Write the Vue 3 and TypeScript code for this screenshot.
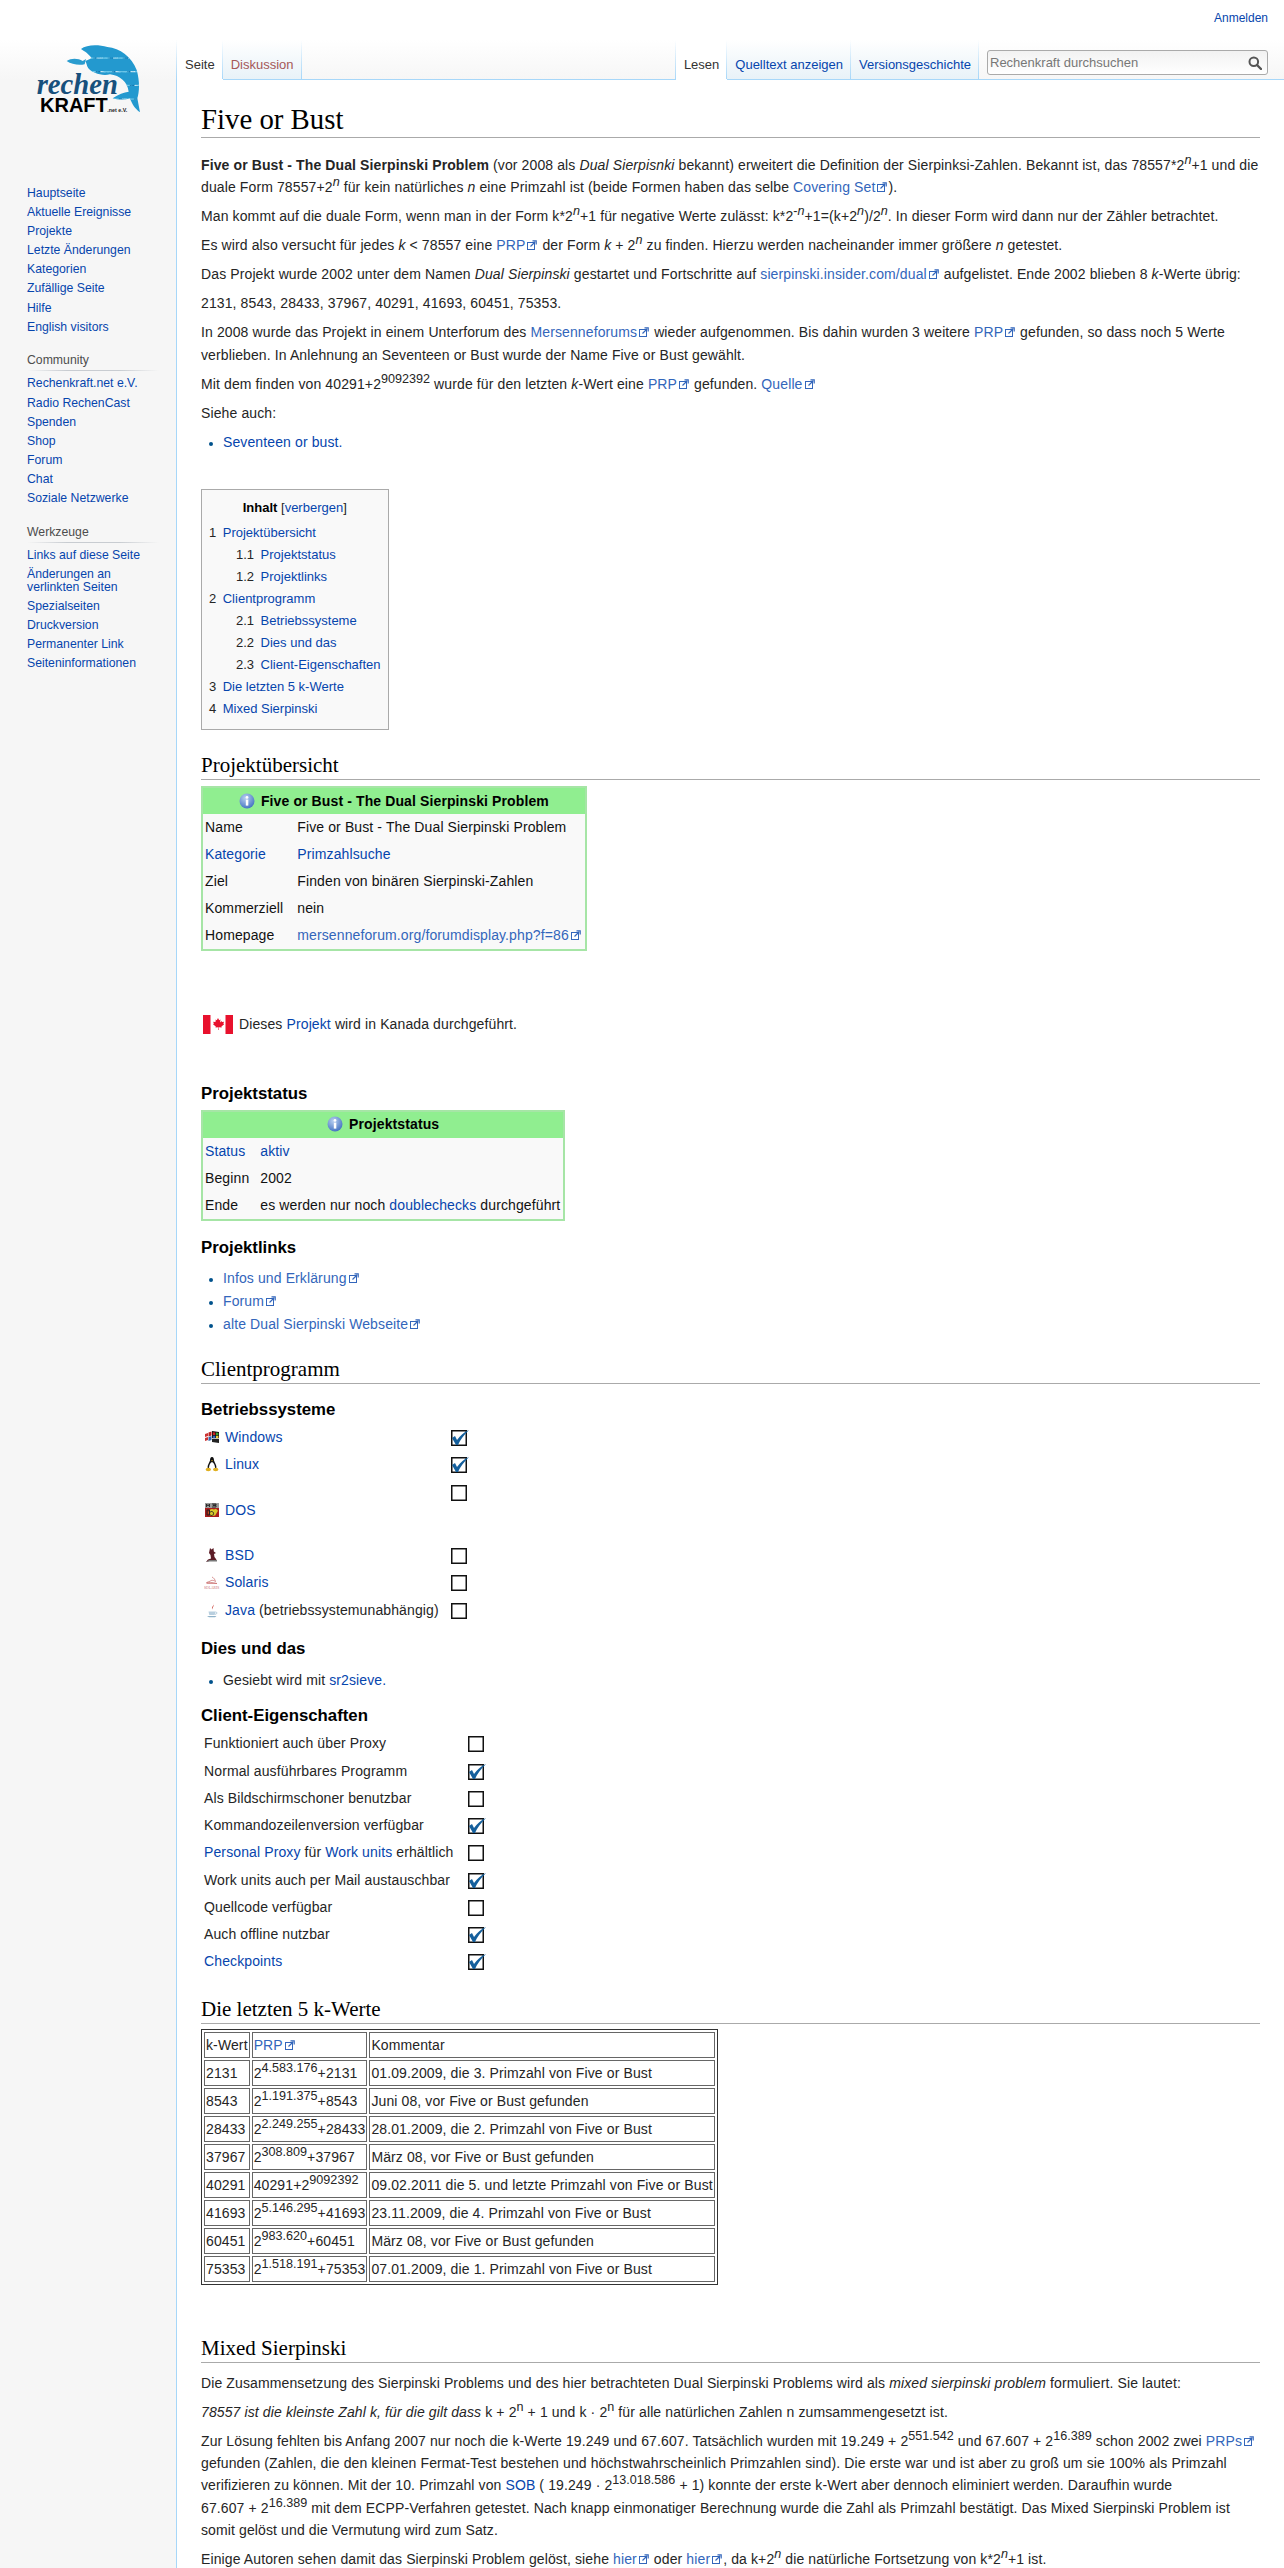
<script setup lang="ts">
interface NavGroup { title?: string; links: string[] }
interface TocItem { num: string; label: string; sub?: boolean }

const navGroups: NavGroup[] = [
  { links: ['Hauptseite', 'Aktuelle Ereignisse', 'Projekte', 'Letzte Änderungen', 'Kategorien', 'Zufällige Seite', 'Hilfe', 'English visitors'] },
  { title: 'Community', links: ['Rechenkraft.net e.V.', 'Radio RechenCast', 'Spenden', 'Shop', 'Forum', 'Chat', 'Soziale Netzwerke'] },
  { title: 'Werkzeuge', links: ['Links auf diese Seite', 'Änderungen an verlinkten Seiten', 'Spezialseiten', 'Druckversion', 'Permanenter Link', 'Seiteninformationen'] },
]

const toc: TocItem[] = [
  { num: '1', label: 'Projektübersicht' },
  { num: '1.1', label: 'Projektstatus', sub: true },
  { num: '1.2', label: 'Projektlinks', sub: true },
  { num: '2', label: 'Clientprogramm' },
  { num: '2.1', label: 'Betriebssysteme', sub: true },
  { num: '2.2', label: 'Dies und das', sub: true },
  { num: '2.3', label: 'Client-Eigenschaften', sub: true },
  { num: '3', label: 'Die letzten 5 k-Werte' },
  { num: '4', label: 'Mixed Sierpinski' },
]

const systems = [
  { name: 'Windows', checked: true, tall: false },
  { name: 'Linux', checked: true, tall: false },
  { name: 'DOS', checked: false, tall: true },
  { name: 'BSD', checked: false, tall: false },
  { name: 'Solaris', checked: false, tall: false },
  { name: 'Java', note: ' (betriebssystemunabhängig)', checked: false, tall: false },
]

const features = [
  { text: 'Funktioniert auch über Proxy', checked: false },
  { text: 'Normal ausführbares Programm', checked: true },
  { text: 'Als Bildschirmschoner benutzbar', checked: false },
  { text: 'Kommandozeilenversion verfügbar', checked: true },
  { proxy: true, checked: false },
  { text: 'Work units auch per Mail austauschbar', checked: true },
  { text: 'Quellcode verfügbar', checked: false },
  { text: 'Auch offline nutzbar', checked: true },
  { link: 'Checkpoints', checked: true },
]

const primes = [
  { k: '2131', exp: '4.583.176', tail: '+2131', note: '01.09.2009, die 3. Primzahl von Five or Bust' },
  { k: '8543', exp: '1.191.375', tail: '+8543', note: 'Juni 08, vor Five or Bust gefunden' },
  { k: '28433', exp: '2.249.255', tail: '+28433', note: '28.01.2009, die 2. Primzahl von Five or Bust' },
  { k: '37967', exp: '308.809', tail: '+37967', note: 'März 08, vor Five or Bust gefunden' },
  { k: '40291', head: '40291+2', exp: '9092392', tail: '', note: '09.02.2011 die 5. und letzte Primzahl von Five or Bust' },
  { k: '41693', exp: '5.146.295', tail: '+41693', note: '23.11.2009, die 4. Primzahl von Five or Bust' },
  { k: '60451', exp: '983.620', tail: '+60451', note: 'März 08, vor Five or Bust gefunden' },
  { k: '75353', exp: '1.518.191', tail: '+75353', note: '07.01.2009, die 1. Primzahl von Five or Bust' },
]

// kleine Fische im Delfin, feste Streuung damit das Logo stabil bleibt
const fish = Array.from({ length: 260 }, (_, i) => ({
  x: 180 + ((i * 67) % 185),
  y: 28 + ((i * 41) % 205),
  rx: 2 + (i % 4),
  fill: i % 4 === 0 ? '#0f6fa8' : i % 4 === 1 ? '#d5eff9' : '#6cc6e8',
}))
</script>

<template>
  <div class="page">
    <aside class="sidebar">
      <svg class="logo" viewBox="0 0 390 270" width="130" height="90">
        <defs>
          <clipPath id="dolphin">
            <path d="M183 42C200 28 235 28 262 36C300 40 335 65 350 105C360 140 358 170 352 190L360 232C345 222 335 205 330 190C315 195 295 195 278 190C295 178 312 172 326 170C322 140 300 122 270 118C245 125 215 112 205 100C200 92 200 85 196 78L215 70C205 55 195 50 183 42Z" />
          </clipPath>
        </defs>
        <path d="M140 78C155 68 175 70 188 78L198 72L194 88C175 92 155 88 140 78Z" fill="#2a9ccf" />
        <g clip-path="url(#dolphin)">
          <rect x="170" y="20" width="200" height="220" fill="#2399cf" />
          <ellipse v-for="(f, i) in fish" :key="i" :cx="f.x" :cy="f.y" :rx="f.rx" ry="1.800" :fill="f.fill" />
        </g>
        <text x="50" y="178" class="logo-rechen">rechen</text>
        <text x="60" y="232" class="logo-kraft">KRAFT</text>
        <text x="262" y="232" class="logo-net">.net e.V.</text>
      </svg>
      <nav v-for="(group, i) in navGroups" :key="i" class="portal">
        <h5 v-if="group.title">{{ group.title }}</h5>
        <ul>
          <li v-for="link in group.links" :key="link"><a>{{ link }}</a></li>
        </ul>
      </nav>
    </aside>

    <div class="main">
      <header class="head">
        <div class="personal"><a>Anmelden</a></div>
        <div class="nav">
          <div class="tabs">
            <span class="tab selected">Seite</span>
            <a class="tab new">Diskussion</a>
          </div>
          <div class="nav-right">
            <div class="tabs">
              <span class="tab selected">Lesen</span>
              <a class="tab">Quelltext anzeigen</a>
              <a class="tab">Versionsgeschichte</a>
            </div>
            <div class="search">
              <input placeholder="Rechenkraft durchsuchen" />
              <svg width="14" height="14" viewBox="0 0 14 14">
                <circle cx="5.8" cy="5.8" r="4.3" fill="none" stroke="#555" stroke-width="2" />
                <path d="M9 9l4 4" stroke="#555" stroke-width="2.4" stroke-linecap="round" />
              </svg>
            </div>
          </div>
        </div>
      </header>

      <main class="content">
        <h1>Five or Bust</h1>

        <div class="intro">
          <p><b>Five or Bust - The Dual Sierpinski Problem</b> (vor 2008 als <i>Dual Sierpisnki</i> bekannt) erweitert die Definition der Sierpinksi-Zahlen. Bekannt ist, das 78557*2<sup><i>n</i></sup>+1 und die duale Form 78557+2<sup><i>n</i></sup> für kein natürliches <i>n</i> eine Primzahl ist (beide Formen haben das selbe <a class="ext">Covering Set</a>).</p>
          <p>Man kommt auf die duale Form, wenn man in der Form k*2<sup><i>n</i></sup>+1 für negative Werte zulässt: k*2<sup>-<i>n</i></sup>+1=(k+2<sup><i>n</i></sup>)/2<sup><i>n</i></sup>. In dieser Form wird dann nur der Zähler betrachtet.</p>
          <p>Es wird also versucht für jedes <i>k</i> &lt; 78557 eine <a class="ext">PRP</a> der Form <i>k</i> + 2<sup><i>n</i></sup> zu finden. Hierzu werden nacheinander immer größere <i>n</i> getestet.</p>
          <p>Das Projekt wurde 2002 unter dem Namen <i>Dual Sierpinski</i> gestartet und Fortschritte auf <a class="ext">sierpinski.insider.com/dual</a> aufgelistet. Ende 2002 blieben 8 <i>k</i>-Werte übrig:</p>
          <p>2131, 8543, 28433, 37967, 40291, 41693, 60451, 75353.</p>
          <p>In 2008 wurde das Projekt in einem Unterforum des <a class="ext">Mersenneforums</a> wieder aufgenommen. Bis dahin wurden 3 weitere <a class="ext">PRP</a> gefunden, so dass noch 5 Werte verblieben. In Anlehnung an Seventeen or Bust wurde der Name Five or Bust gewählt.</p>
          <p>Mit dem finden von 40291+2<sup>9092392</sup> wurde für den letzten <i>k</i>-Wert eine <a class="ext">PRP</a> gefunden. <a class="ext">Quelle</a></p>
          <p>Siehe auch:</p>
          <ul class="list"><li><a>Seventeen or bust.</a></li></ul>
        </div>

        <div class="toc">
          <div class="toc-title"><b>Inhalt</b> [<a>verbergen</a>]</div>
          <div v-for="item in toc" :key="item.num" class="toc-item" :class="{ sub: item.sub }">
            <span>{{ item.num }}</span><a>{{ item.label }}</a>
          </div>
        </div>

        <h2 class="h-overview">Projektübersicht</h2>
        <table class="infobox">
          <thead>
            <tr><th colspan="2">
              <svg class="info" width="16" height="16" viewBox="0 0 16 16">
                <defs>
                  <radialGradient id="infoFill" cx="40%" cy="30%" r="75%">
                    <stop offset="0" stop-color="#b9d0f0" /><stop offset="1" stop-color="#3f6fc0" />
                  </radialGradient>
                </defs>
                <circle cx="8" cy="8" r="7.5" fill="url(#infoFill)" />
                <circle cx="8" cy="4.4" r="1.4" fill="#fff" />
                <rect x="6.8" y="6.6" width="2.5" height="6" fill="#fff" />
              </svg>
              Five or Bust - The Dual Sierpinski Problem
            </th></tr>
          </thead>
          <tbody>
            <tr><td>Name</td><td>Five or Bust - The Dual Sierpinski Problem</td></tr>
            <tr><td><a>Kategorie</a></td><td><a>Primzahlsuche</a></td></tr>
            <tr><td>Ziel</td><td>Finden von binären Sierpinski-Zahlen</td></tr>
            <tr><td>Kommerziell</td><td>nein</td></tr>
            <tr><td>Homepage</td><td><a class="ext">mersenneforum.org/forumdisplay.php?f=86</a></td></tr>
          </tbody>
        </table>

        <div class="country">
          <svg width="30" height="19" viewBox="0 0 30 19">
            <rect width="30" height="19" fill="#fff" />
            <rect width="7.5" height="19" fill="#e8112d" />
            <rect x="22.5" width="7.5" height="19" fill="#e8112d" />
            <path d="M15 3l1.2 2.2 1.3-.7-.5 3 1.6-1.500.4 1 2-.3-.6 2 .8.500-2.800 2.300.3 1.100-2.900-.3.1 2.700h-.6l.1-2.700-2.900.3.3-1.100-2.800-2.300.8-.5-.6-2 2 .3.4-1L13 7.500l-.5-3 1.300.7z" fill="#e8112d" />
          </svg>
          <span>Dieses <a>Projekt</a> wird in Kanada durchgeführt.</span>
        </div>

        <h3 class="h-status">Projektstatus</h3>
        <table class="infobox narrow">
          <thead>
            <tr><th colspan="2">
              <svg class="info" width="16" height="16" viewBox="0 0 16 16">
                <circle cx="8" cy="8" r="7.5" fill="url(#infoFill)" />
                <circle cx="8" cy="4.4" r="1.4" fill="#fff" />
                <rect x="6.8" y="6.6" width="2.5" height="6" fill="#fff" />
              </svg>
              Projektstatus
            </th></tr>
          </thead>
          <tbody>
            <tr><td><a>Status</a></td><td><a>aktiv</a></td></tr>
            <tr><td>Beginn</td><td>2002</td></tr>
            <tr><td>Ende</td><td>es werden nur noch <a>doublechecks</a> durchgeführt</td></tr>
          </tbody>
        </table>

        <h3 class="h-links">Projektlinks</h3>
        <ul class="list links">
          <li><a class="ext">Infos und Erklärung</a></li>
          <li><a class="ext">Forum</a></li>
          <li><a class="ext">alte Dual Sierpinski Webseite</a></li>
        </ul>

        <h2 class="h-client">Clientprogramm</h2>
        <h3 class="h-os">Betriebssysteme</h3>
        <table class="os">
          <tbody>
            <tr v-for="sys in systems" :key="sys.name" :class="{ tall: sys.tall }">
              <td class="os-name">
                <svg v-if="sys.name === 'Windows'" class="os-icon" viewBox="0 0 16 16">
                  <path d="M1 5l3-1v3l-3 1zM1 9l3-1v3l-3 1z" fill="#c33" />
                  <path d="M4.500 3.500l3-1v4l-3 1z" fill="#b22" /><path d="M4.500 8l3-1v4l-3 1z" fill="#36a" />
                  <path d="M8 2l7 1v6H8z" fill="#111" /><path d="M8.800 3.200l2.500.3v2.400H8.800z" fill="#c22" />
                  <path d="M12 3.600l2.400.3v2.100H12z" fill="#3a3" /><path d="M8.800 6.700h2.500v2.500H8.800z" fill="#36b" />
                  <path d="M12 6.700h2.400v2.500H12z" fill="#ec3" /><path d="M8 9.800h7V14l-7-1z" fill="#222" />
                </svg>
                <svg v-else-if="sys.name === 'Linux'" class="os-icon" viewBox="0 0 16 16">
                  <path d="M8 1C6.300 1 6 3 6 4.500 5.500 6.500 3.500 8.500 3.500 11.500L5 13h6l1.500-1.500C12.500 8.500 10.500 6.500 10 4.500 10 3 9.700 1 8 1z" fill="#111" />
                  <path d="M8 6C6.500 6.500 5 9 5 11.500L6 13h4l1-1.500C11 9 9.500 6.500 8 6z" fill="#fff" />
                  <ellipse cx="4.300" cy="13.500" rx="2.700" ry="1.700" fill="#e0b020" /><ellipse cx="11.700" cy="13.500" rx="2.700" ry="1.700" fill="#e0b020" />
                  <path d="M7 4.300h2L8 5.500z" fill="#e0b020" />
                </svg>
                <svg v-else-if="sys.name === 'DOS'" class="os-icon" viewBox="0 0 16 16">
                  <rect x="1" y="1" width="14" height="5" fill="#9a9a9a" />
                  <path d="M2.500 5V2l1.500 2 1.500-2v3M8 2H12v1H9v.5h3V5H8" fill="none" stroke="#222" stroke-width=".9" />
                  <rect x="1" y="6" width="14" height="9" fill="#a81d1d" />
                  <path d="M10 7.500a3.500 3.500 0 1 0 0 6l1 .3 3-5-2-2z" fill="#d9c92a" />
                  <path d="M3 8h2.500v5H3zM7.500 9.500a2 2 0 1 0 .1 0z" fill="none" stroke="#222" />
                </svg>
                <svg v-else-if="sys.name === 'BSD'" class="os-icon" viewBox="0 0 16 16">
                  <path d="M6 1l1.500 1.500L9.500 1 9.800 4.500 12 6 10 7l.5 3 1.500 2 1 2H5.500L2 15l2-2.500 3-1-.500-3.500L5 6z" fill="#5c1c26" />
                  <path d="M2 15l3-2h8v1.500H5z" fill="#777" />
                </svg>
                <svg v-else-if="sys.name === 'Solaris'" class="os-icon" viewBox="0 0 16 16">
                  <path d="M8 3c2 1 3 2.500 3.500 4.500C10 6.500 8.500 6 7 6.500 6 7.500 4 8 2.500 8.500 5 8.500 8 8 13 9.500H2.500" fill="none" stroke="#c96a6a" stroke-width=".7" />
                  <text x="0" y="14.500" class="solaris">SOLARIS</text>
                </svg>
                <svg v-else class="os-icon" viewBox="0 0 16 16">
                  <path d="M9 1C11 3.500 6.500 4.500 8.500 8 7.500 5.500 11 5 9 1z" fill="#c8423a" />
                  <path d="M4.500 9.500h7l-.8 3.500H5.300z" fill="#b9cfdf" />
                  <path d="M3 14h9.500l-1.500 1.200H5z" fill="#8fb2c9" />
                  <path d="M11.500 10c2 0 2 2-.5 2.300" fill="none" stroke="#8fb2c9" stroke-width=".7" />
                </svg>
                <a>{{ sys.name }}</a><span v-if="sys.note">{{ sys.note }}</span>
              </td>
              <td class="check-cell">
                <svg class="check" viewBox="0 0 19 16">
                  <rect x=".75" y=".75" width="14.500" height="14.500" fill="#fff" stroke="#111" stroke-width="1.500" />
                  <path v-if="sys.checked" d="M1 8L4 6l2 4C9 6 13 2 18 0 13 5 9 10 7 15H5z" fill="#145f9c" />
                </svg>
              </td>
            </tr>
          </tbody>
        </table>

        <h3 class="h-misc">Dies und das</h3>
        <ul class="list misc"><li>Gesiebt wird mit <a>sr2sieve.</a></li></ul>

        <h3 class="h-props">Client-Eigenschaften</h3>
        <table class="props">
          <tbody>
            <tr v-for="(feat, i) in features" :key="i">
              <td class="prop-name">
                <template v-if="feat.proxy"><a>Personal Proxy</a> für <a>Work units</a> erhältlich</template>
                <a v-else-if="feat.link">{{ feat.link }}</a>
                <template v-else>{{ feat.text }}</template>
              </td>
              <td class="check-cell">
                <svg class="check" viewBox="0 0 19 16">
                  <rect x=".75" y=".75" width="14.500" height="14.500" fill="#fff" stroke="#111" stroke-width="1.500" />
                  <path v-if="feat.checked" d="M1 8L4 6l2 4C9 6 13 2 18 0 13 5 9 10 7 15H5z" fill="#145f9c" />
                </svg>
              </td>
            </tr>
          </tbody>
        </table>

        <h2 class="h-last">Die letzten 5 k-Werte</h2>
        <table class="grid">
          <tbody>
            <tr><td>k-Wert</td><td><a class="ext">PRP</a></td><td>Kommentar</td></tr>
            <tr v-for="row in primes" :key="row.k">
              <td>{{ row.k }}</td>
              <td>{{ row.head ?? '2' }}<sup>{{ row.exp }}</sup>{{ row.tail }}</td>
              <td>{{ row.note }}</td>
            </tr>
          </tbody>
        </table>

        <h2 class="h-mixed">Mixed Sierpinski</h2>
        <div class="mixed">
          <p>Die Zusammensetzung des Sierpinski Problems und des hier betrachteten Dual Sierpinski Problems wird als <i>mixed sierpinski problem</i> formuliert. Sie lautet:</p>
          <p><i>78557 ist die kleinste Zahl k, für die gilt dass</i> k + 2<sup>n</sup> + 1 und k · 2<sup>n</sup> für alle natürlichen Zahlen n zumsammengesetzt ist.</p>
          <p>Zur Lösung fehlten bis Anfang 2007 nur noch die k-Werte 19.249 und 67.607. Tatsächlich wurden mit 19.249 + 2<sup>551.542</sup> und 67.607 + 2<sup>16.389</sup> schon 2002 zwei <a class="ext">PRPs</a> gefunden (Zahlen, die den kleinen Fermat-Test bestehen und höchstwahrscheinlich Primzahlen sind). Die erste war und ist aber zu groß um sie 100% als Primzahl verifizieren zu können. Mit der 10. Primzahl von <a>SOB</a> ( 19.249 · 2<sup>13.018.586</sup> + 1) konnte der erste k-Wert aber dennoch eliminiert werden. Daraufhin wurde <span class="nowrap">67.607 + 2<sup>16.389</sup></span> mit dem ECPP-Verfahren getestet. Nach knapp einmonatiger Berechnung wurde die Zahl als Primzahl bestätigt. Das Mixed Sierpinski Problem ist somit gelöst und die Vermutung wird zum Satz.</p>
          <p>Einige Autoren sehen damit das Sierpinski Problem gelöst, siehe <a class="ext">hier</a> oder <a class="ext">hier</a>, da k+2<sup><i>n</i></sup> die natürliche Fortsetzung von k*2<sup><i>n</i></sup>+1 ist.</p>
        </div>
      </main>
    </div>
  </div>
</template>

<style>
html, body {
  margin: 0;
  background: #fff;
}
</style>

<style scoped>
.page {
  display: flex;
  height: 2568px;
  overflow: hidden;
  font-family: "Liberation Sans", Arial, sans-serif;
  font-size: 14px;
  line-height: 22.4px;
  color: #252525;
}

a {
  color: #0645ad;
}

.nowrap {
  white-space: nowrap;
}

/* sidebar */
.sidebar {
  width: 176px;
  flex: none;
  box-sizing: border-box;
  padding-top: 35px;
  background: linear-gradient(#fff 40px, #f6f6f6 80px);
}

.logo {
  display: block;
  margin: 0 0 62px 20px;
}

.logo-rechen {
  font: italic bold 86px "Liberation Serif", serif;
  fill: #17507c;
}

.logo-kraft {
  font: bold 60px "Liberation Sans", sans-serif;
  fill: #000;
}

.logo-net {
  font: bold 16px "Liberation Sans", sans-serif;
  fill: #222;
}

.portal {
  padding: 0 17px 0 27px;
  margin-bottom: 14.500px;
  font-size: 12.25px;
  line-height: 13.2px;
}

.portal h5 {
  margin: 0 0 6px;
  padding-bottom: 4px;
  font-size: 12.25px;
  font-weight: normal;
  color: #4d4d4d;
  background: linear-gradient(to right, transparent, #c8ccd1 30%, #c8ccd1 70%, transparent) bottom / 100% 1px no-repeat;
}

.portal ul {
  margin: 0;
  padding: 0;
  list-style: none;
}

.portal li {
  padding-bottom: 5.900px;
}

/* head */
.main {
  flex: 1;
  min-width: 0;
}

.head {
  height: 80px;
  background: linear-gradient(#fff 40px, #f6f6f6 80px);
}

.personal {
  height: 40px;
  box-sizing: border-box;
  padding: 10px 16px 0 0;
  text-align: right;
  font-size: 12px;
  line-height: 16px;
}

.nav {
  height: 40px;
  display: flex;
  justify-content: space-between;
  background: linear-gradient(#a7d7f9, #a7d7f9) bottom / 100% 1px no-repeat;
}

.nav-right {
  display: flex;
}

.tabs {
  display: flex;
  padding-left: 1px;
  background: linear-gradient(to top, #a7d7f9, transparent) left / 1px 100% no-repeat;
}

.tab {
  box-sizing: border-box;
  height: 40px;
  padding: 16px 8px 0;
  font-size: 13px;
  line-height: 18px;
  color: #0645ad;
  border-bottom: 1px solid #a7d7f9;
  background:
    linear-gradient(to top, #a7d7f9, transparent) right / 1px 100% no-repeat,
    linear-gradient(#fff, #e8f2f8);
}

.tab.selected {
  color: #333;
  border-bottom-color: transparent;
  background:
    linear-gradient(to top, #a7d7f9, transparent) right / 1px 100% no-repeat,
    #fff;
}

.tab.new {
  color: #a55858;
}

.search {
  width: 281px;
  height: 25px;
  box-sizing: border-box;
  margin: 10px 16px 0 8px;
  display: flex;
  align-items: center;
  padding-right: 5px;
  border: 1px solid #aaa;
  border-radius: 3px;
  background: linear-gradient(#f2f2f2, #fff);
}

.search input {
  flex: 1;
  min-width: 0;
  padding: 0 0 0 2px;
  border: 0;
  outline: 0;
  background: transparent;
  font-family: inherit;
  font-size: 13px;
}

.search input::placeholder {
  color: #777;
}

/* content */
.content {
  box-sizing: border-box;
  height: 2488px;
  padding: 22px 24px 0;
  border-left: 1px solid #a7d7f9;
  background: #fff;
  letter-spacing: 0.115px;
}

h1, h2 {
  margin: 0;
  font-family: "Liberation Serif", serif;
  font-weight: normal;
  color: #000;
  border-bottom: 1px solid #aaa;
  letter-spacing: 0;
}

h1 {
  font-size: 28.800px;
  line-height: 35px;
}

h2 {
  font-size: 21px;
  line-height: 28px;
}

h3 {
  margin: 0;
  font-size: 16.800px;
  line-height: 22px;
  color: #000;
  letter-spacing: 0;
}

p {
  margin: 0 0 6.600px;
}

sup {
  font-size: 12.600px;
  line-height: 0;
  vertical-align: super;
  letter-spacing: 0;
}

a.ext {
  color: #36b;
  padding-right: 13px;
  background: url("data:image/svg+xml,%3Csvg xmlns='http://www.w3.org/2000/svg' width='10' height='10' viewBox='0 0 10 10'%3E%3Crect x='.5' y='2.500' width='7' height='7' fill='%23fff' stroke='%2336b'/%3E%3Cpath d='M3.500 6.500L8 2M5.500 .8h3.700v3.700' fill='none' stroke='%2336b' stroke-width='1.200'/%3E%3C/svg%3E") right 1px center / 10px 10px no-repeat;
}

.intro {
  margin-top: 16px;
}

.list {
  margin: 0;
  padding: 0 0 0 22px;
}

.list li::marker {
  color: #00528c;
  font-size: 12px;
}

.toc {
  display: table;
  box-sizing: border-box;
  margin-top: 36px;
  padding: 7px 7px 9px;
  border: 1px solid #aaa;
  background: #f9f9f9;
  font-size: 13px;
  line-height: 22px;
  letter-spacing: 0;
}

.toc-title {
  margin-bottom: 3px;
  text-align: center;
}

.toc-title b {
  color: #000;
}

.toc-item {
  display: flex;
  gap: 6.500px;
}

.toc-item.sub {
  margin-left: 27px;
}

.h-overview {
  margin-top: 21px;
  margin-bottom: 6px;
}

.infobox {
  border: 2px solid #a6e5a6;
  border-spacing: 0;
  background: #f9f9f9;
  color: #111;
}

.infobox th {
  height: 26px;
  padding: 0;
  background: #90ee90;
  color: #000;
  font-size: 14px;
}

.info {
  vertical-align: -3px;
  margin-right: 2px;
}

.infobox td {
  height: 27px;
  box-sizing: border-box;
  padding: 0 3px 0 2px;
  line-height: 21px;
}

.infobox td:first-child {
  padding-right: 12px;
}

.infobox.narrow td:first-child {
  padding-right: 9px;
}

.country {
  display: flex;
  align-items: center;
  gap: 6px;
  margin: 62px 0 0 2px;
}

.h-status {
  margin-top: 47px;
  margin-bottom: 5px;
}

.h-links {
  margin-top: 16px;
  margin-bottom: 8px;
}

.links li {
  margin-bottom: 0.600px;
}

.h-client {
  margin-top: 20px;
}

.h-os {
  margin-top: 15px;
  margin-bottom: 6px;
}

.os, .props {
  border-spacing: 0;
  line-height: 20px;
}

.os td, .props td {
  padding: 0;
  vertical-align: top;
}

.os tr {
  height: 27.400px;
}

.os tr.tall {
  height: 63px;
}

.os-name {
  padding: 0 12px 0 3px !important;
}

.tall .os-name {
  vertical-align: middle !important;
  padding-bottom: 6px !important;
}

.os-icon {
  width: 16px;
  height: 16px;
  margin-right: 5px;
  vertical-align: -3px;
}

.solaris {
  font: 3.500px "Liberation Serif", serif;
  fill: #c96a6a;
}

.check-cell {
  padding-top: 3px !important;
}

.check {
  display: block;
  width: 19px;
  height: 16px;
  overflow: visible;
}

.h-misc {
  margin-top: 11px;
  margin-bottom: 9px;
}

.h-props {
  margin-top: 14px;
  margin-bottom: 6px;
}

.props tr {
  height: 27.250px;
}

.prop-name {
  width: 264px;
  padding-left: 3px !important;
}

.h-last {
  margin-top: 16px;
  margin-bottom: 5px;
}

.grid {
  border: 1px solid #333;
  border-spacing: 2px;
  line-height: 22px;
}

.grid td {
  padding: 1px;
  border: 1px solid #666;
}

.h-mixed {
  margin-top: 49px;
}

.mixed {
  margin-top: 9px;
}
</style>
